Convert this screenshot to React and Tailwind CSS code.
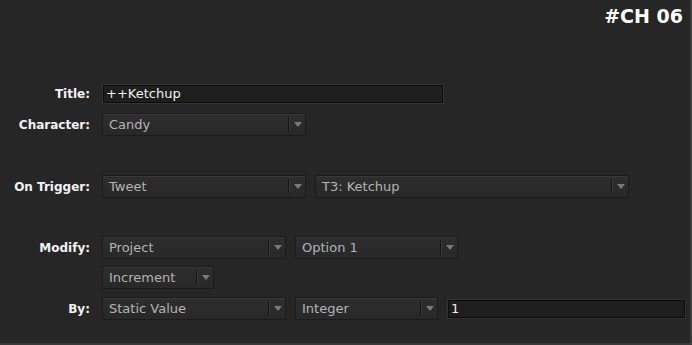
import React from 'react';

const font = { fontFamily: '"DejaVu Sans", Verdana, sans-serif' };

function Select({ value, width }) {
  return (
    <div
      className="flex h-[23px] items-stretch border border-[#1b1b1b] bg-gradient-to-b from-[#2e2e2e] to-[#282828] shadow-[inset_0_1px_0_#383838]"
      style={{ width }}
    >
      <div className="flex flex-1 items-center pl-[6px] pt-px text-[13px] text-[#b4b4b4]">{value}</div>
      <div className="my-[3px] w-[2px] border-l border-[#141414] bg-[#3a3a3a]" />
      <div className="flex w-[15px] items-center justify-center">
        <svg width="8" height="5" viewBox="0 0 8 5">
          <path d="M0 0H8L4 5Z" fill="#7a7a7a" />
        </svg>
      </div>
    </div>
  );
}

function Input({ value, width }) {
  return (
    <div className="border border-[#333] bg-[#222]" style={{ width }}>
      <div className="flex h-[18px] items-center border border-[#0c0c0c] bg-[#1e1e1e] pl-[2px] text-[13px] text-[#f0f0f0]">
        {value}
      </div>
    </div>
  );
}

function Row({ label, children, className = '' }) {
  return (
    <div className={`flex items-center ${className}`}>
      <div className="w-[90px] text-right text-[12px] font-bold text-[#f2f2f2]">{label}</div>
      <div className="ml-3 flex items-center gap-[9px]">{children}</div>
    </div>
  );
}

export default function App() {
  return (
    <div className="h-[345px] w-[692px] bg-[#3a3a3a]" style={font}>
      <div className="h-[343px] w-[690px] bg-[#262626]">
        <div className="flex h-[84px] justify-end pr-[7px] pt-[4px]">
          <span className="text-[19px] font-bold leading-6 text-white">#CH 06</span>
        </div>
        <Row label="Title:">
          <Input value="++Ketchup" width={342} />
        </Row>
        <Row label="Character:" className="mt-[9px]">
          <Select value="Candy" width={204} />
        </Row>
        <Row label="On Trigger:" className="mt-[39px]">
          <Select value="Tweet" width={204} />
          <Select value="T3: Ketchup" width={314} />
        </Row>
        <Row label="Modify:" className="mt-[38px]">
          <Select value="Project" width={184} />
          <Select value="Option 1" width={163} />
        </Row>
        <Row label="" className="mt-[7px]">
          <Select value="Increment" width={112} />
        </Row>
        <Row label="By:" className="mt-[8px]">
          <Select value="Static Value" width={184} />
          <Select value="Integer" width={143} />
          <Input value="1" width={239} />
        </Row>
      </div>
    </div>
  );
}
